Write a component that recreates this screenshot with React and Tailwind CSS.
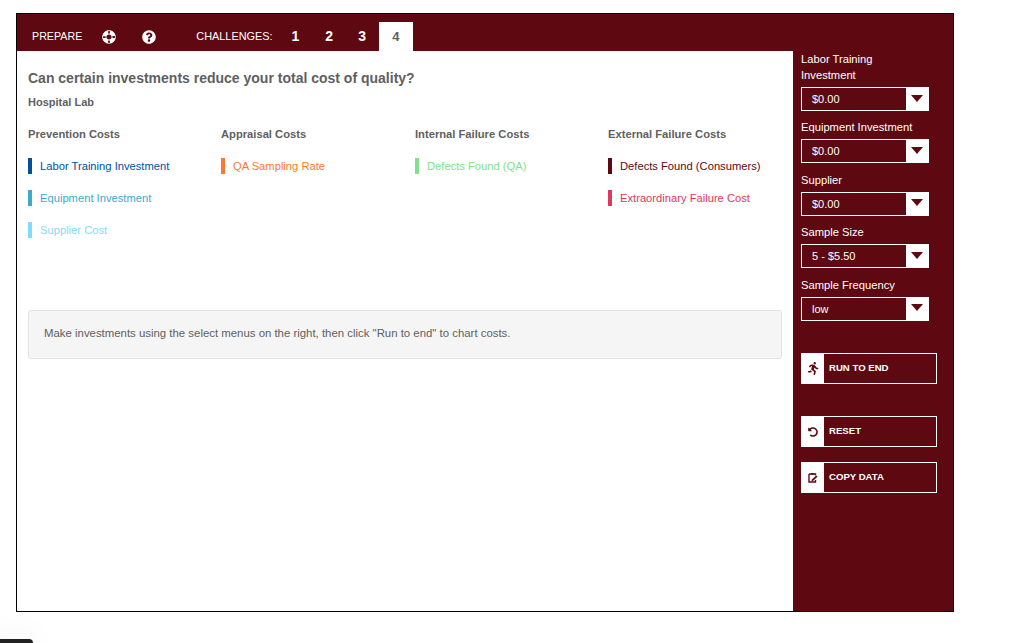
import React from "react";
import { FaLifeRing, FaQuestionCircle, FaUndoAlt } from "react-icons/fa";
import { FaPersonRunning } from "react-icons/fa6";

const font = "font-['Helvetica','Liberation_Sans','Arial',sans-serif]";

function ClipIcon() {
  return (
    <svg width="10" height="11" viewBox="0 0 10 11" fill="none" aria-hidden="true">
      <path d="M1 2h6.5v1.5M7.5 8v2H1V2" stroke="#5e0912" strokeWidth="1.4" />
      <path d="M3 1h3v1.6H3z" fill="#5e0912" />
      <path d="M3.6 7.8 8.2 3.4l1.3 1.3-4.6 4.4H3.6z" fill="#5e0912" />
    </svg>
  );
}

const cols = [
  { title: "Prevention Costs", items: [["Labor Training Investment", "text-[#00509e]", "bg-[#00509e]"], ["Equipment Investment", "text-[#3fa9c9]", "bg-[#3fa9c9]"], ["Supplier Cost", "text-[#7fdcff]", "bg-[#7fdcff]"]] },
  { title: "Appraisal Costs", items: [["QA Sampling Rate", "text-[#ff7733]", "bg-[#ff7733]"]] },
  { title: "Internal Failure Costs", items: [["Defects Found (QA)", "text-[#85e089]", "bg-[#85e089]"]] },
  { title: "External Failure Costs", items: [["Defects Found (Consumers)", "text-[#5e0912]", "bg-[#5e0912]"], ["Extraordinary Failure Cost", "text-[#e0385c]", "bg-[#e0385c]"]] },
];

const selects = [
  ["Labor Training Investment", "$0.00"],
  ["Equipment Investment", "$0.00"],
  ["Supplier", "$0.00"],
  ["Sample Size", "5 - $5.50"],
  ["Sample Frequency", "low"],
];

function Select({ label, value }) {
  return (
    <div className="mb-[8.4px]">
      <div className="max-w-[128px] text-[11.2px] leading-[16px] text-white">{label}</div>
      <div className="mt-[4px] flex h-[24px] w-[128px] border border-white">
        <div className="flex-1 pl-[10px] text-[11px] leading-[23px] text-white">{value}</div>
        <div className="flex w-[22px] items-center justify-center bg-white pb-[2px] pr-[1px]">
          <div className="h-0 w-0 border-x-[6px] border-t-[7px] border-x-transparent border-t-[#5e0912]" />
        </div>
      </div>
    </div>
  );
}

function ActionButton({ icon, label, className }) {
  return (
    <div className={`flex h-[31px] w-[136px] border border-white ${className}`}>
      <div className="flex w-[22px] items-center justify-center bg-white text-[#5e0912]">{icon}</div>
      <div className="pl-[5px] text-[9.6px] font-bold leading-[27px] text-white">{label}</div>
    </div>
  );
}

export default function App() {
  return (
    <div className={`relative h-[643px] w-[1020px] overflow-hidden bg-white pl-[16px] pt-[13px] ${font}`}>
      <div className="flex h-[599px] w-[938px] flex-col border border-black">
        <div className="flex min-h-0 flex-1">
          <div className="flex w-[776px] flex-col">
            <div className="flex h-[37px] items-end bg-[#5e0912] pl-[15px] text-white">
              <div className="flex h-[29px] items-center">
                <span className="text-[10.7px]">PREPARE</span>
                <FaLifeRing className="ml-[20px] rotate-45 text-[14px]" />
                <FaQuestionCircle className="ml-[26px] text-[14px]" />
                <span className="ml-[40px] text-[10.9px]">CHALLENGES:</span>
                <span className="ml-[19px] text-[14px] font-bold">1</span>
                <span className="ml-[26px] text-[14px] font-bold">2</span>
                <span className="ml-[25px] text-[14px] font-bold">3</span>
              </div>
              <div className="ml-[13px] flex h-[29px] w-[34px] items-center justify-center bg-white text-[13px] font-bold text-[#5f5f5f]">4</div>
            </div>
            <div className="flex-1 bg-white pl-[11px] pr-[11px] pt-[19px]">
              <h1 className="text-[14px] font-bold leading-[16px] text-[#5f5f5f]">Can certain investments reduce your total cost of quality?</h1>
              <div className="mt-[9px] text-[11px] font-bold leading-[14px] text-[#5f5f5f]">Hospital Lab</div>
              <div className="mt-[18px] grid grid-cols-[193px_194px_193px_1fr]">
                {cols.map((c) => (
                  <div key={c.title}>
                    <div className="text-[11.2px] font-bold leading-[14px] text-[#5f5f5f]">{c.title}</div>
                    <div className="mt-[17px] flex flex-col gap-[16px]">
                      {c.items.map(([t, text, bar]) => (
                        <div key={t} className="flex h-[16px] items-center">
                          <div className={`h-[16px] w-[4px] ${bar}`} />
                          <span className={`ml-[8px] text-[11.2px] ${text}`}>{t}</span>
                        </div>
                      ))}
                    </div>
                  </div>
                ))}
              </div>
              <div className="mt-[72px] h-[49px] rounded-[3px] border border-[#e3e3e3] bg-[#f5f5f5] pl-[15px] text-[11.4px] leading-[45px] text-[#5f5f5f]">
                Make investments using the select menus on the right, then click "Run to end" to chart costs.
              </div>
            </div>
          </div>
          <div className="flex-1 bg-[#5e0912] pl-[8px] pt-[37px]">
            {selects.map(([l, v]) => (
              <Select key={l} label={l} value={v} />
            ))}
            <ActionButton className="mt-[32.5px]" icon={<FaPersonRunning className="text-[13px]" />} label="RUN TO END" />
            <ActionButton className="mt-[32px]" icon={<FaUndoAlt className="text-[10px]" />} label="RESET" />
            <ActionButton className="mt-[15px]" icon={<ClipIcon />} label="COPY DATA" />
          </div>
        </div>
      </div>
      <div className="absolute bottom-[-6px] left-[-4px] h-[10px] w-[37px] rounded-t-[4px] bg-[#222222] shadow-[0_0_30px_rgba(0,0,0,0.1)]" />
    </div>
  );
}
